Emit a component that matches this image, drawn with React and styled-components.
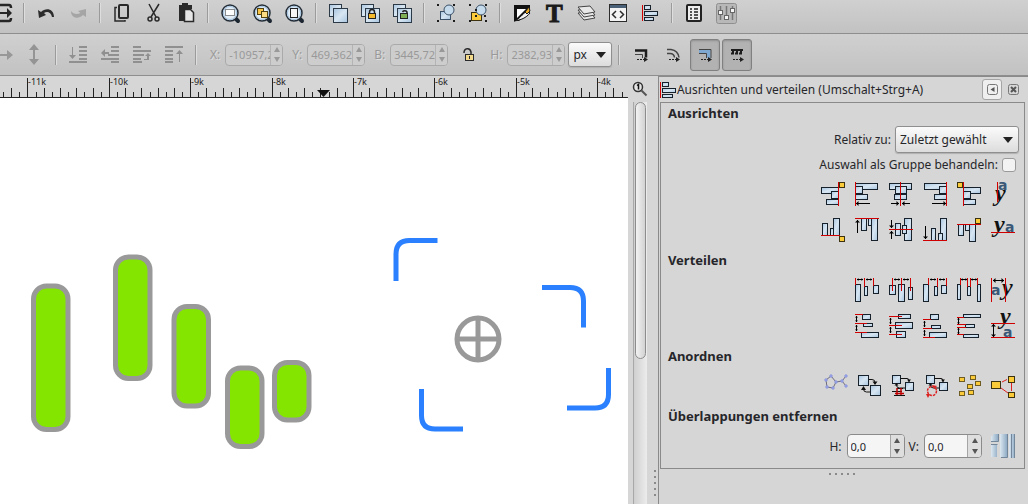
import React from 'react';
import styled, { createGlobalStyle, css } from 'styled-components';

const GlobalStyle = createGlobalStyle`
  * {
    box-sizing: border-box;
  }
  body {
    margin: 0;
    overflow: hidden;
    font-family: 'Noto Sans', 'Open Sans', sans-serif;
    font-size: 12px;
    color: #26262a;
  }
  button, input, select {
    font: inherit;
    color: inherit;
    margin: 0;
  }
`;

/* ---------- small drawing helpers ---------- */

const Box = ({ b: [x1, y1, x2, y2], gold }) => (
  <rect
    x={x1 + 0.5}
    y={y1 + 0.5}
    width={x2 - x1 - 1}
    height={y2 - y1 - 1}
    fill={gold ? '#fccb3a' : 'url(#steel)'}
    stroke={gold ? '#3d3210' : '#17212c'}
  />
);

// l = [x1, y1, x2, y2], always horizontal or vertical
const Red = ({ l: [x1, y1, x2, y2] }) => (
  <rect
    x={x1}
    y={y1}
    width={Math.max(x2 - x1, 1)}
    height={Math.max(y2 - y1, 1)}
    fill="#d00000"
  />
);

const headPath = (x, y, dir, s) => {
  if (dir === 'l') return `M${x} ${y + 0.5}l${s}-${s}v${s * 2}z`;
  if (dir === 'r') return `M${x} ${y + 0.5}l-${s}-${s}v${s * 2}z`;
  if (dir === 'u') return `M${x + 0.5} ${y}l-${s} ${s}h${s * 2}z`;
  return `M${x + 0.5} ${y}l-${s}-${s}h${s * 2}z`;
};

const Arrow = ({ l: [x1, y1, x2, y2], heads = '' }) => {
  const ends = { l: [x1, y1], u: [x1, y1], r: [x2, y1], d: [x1, y2] };
  const size = Math.max(x2 - x1, y2 - y1) < 8 ? 1.5 : 2.5;
  return (
    <>
      <rect
        x={x1}
        y={y1}
        width={Math.max(x2 - x1, 1)}
        height={Math.max(y2 - y1, 1)}
        fill="#000"
      />
      {heads.split('').map(dir => (
        <path key={dir} d={headPath(ends[dir][0], ends[dir][1], dir, size)} />
      ))}
    </>
  );
};

const Glyph = ({ size = 24, children }) => (
  <Svg width={size} height={size} viewBox={`0 0 ${size} ${size}`} aria-hidden>
    {children}
  </Svg>
);

const Letters = ({ a, y }) => (
  <>
    <text
      x={y[0]}
      y={y[1]}
      fontFamily="Liberation Serif, serif"
      fontWeight="700"
      fontStyle="italic"
      fontSize="24"
      fill="#111"
    >
      y
    </text>
    <text
      x={a[0]}
      y={a[1]}
      fontFamily="DejaVu Sans, sans-serif"
      fontWeight="700"
      fontSize="14"
      fill="#3a5877"
    >
      a
    </text>
  </>
);

const Shapes = ({ boxes = [], gold = [], red = [], arrows = [], letters }) => (
  <Glyph>
    {boxes.map((b, i) => (
      <Box key={i} b={b} />
    ))}
    {gold.map((b, i) => (
      <Box key={i} b={b} gold />
    ))}
    {letters && <Letters {...letters} />}
    {red.map((l, i) => (
      <Red key={i} l={l} />
    ))}
    {arrows.map(([l, heads], i) => (
      <Arrow key={i} l={l} heads={heads} />
    ))}
  </Glyph>
);

/* ---------- align and distribute ---------- */

const ALIGN = [
  {
    name: 'Rechte Kanten an linker Seite des Ankers ausrichten',
    boxes: [[0, 5, 18, 12], [10, 9, 18, 17], [5, 17, 18, 23]],
    gold: [[18, 0, 24, 6]],
    red: [[17, 0, 18, 24]],
  },
  {
    name: 'Linke Kanten ausrichten',
    boxes: [[0, 1, 23, 8], [0, 4, 8, 12], [0, 12, 13, 18]],
    red: [[0, 0, 1, 24]],
    arrows: [[[1, 21, 15, 21], 'l']],
  },
  {
    name: 'Vertikal zentrieren',
    boxes: [[0, 1, 23, 8], [6, 4, 18, 12], [5, 12, 18, 18]],
    red: [[11, 0, 12, 24]],
    arrows: [[[2, 21, 10, 21], 'r'], [[13, 21, 21, 21], 'l']],
  },
  {
    name: 'Rechte Kanten ausrichten',
    boxes: [[1, 1, 24, 8], [16, 4, 24, 12], [11, 12, 24, 18]],
    red: [[23, 0, 24, 24]],
    arrows: [[[9, 21, 23, 21], 'r']],
  },
  {
    name: 'Linke Kanten an rechter Seite des Ankers ausrichten',
    boxes: [[6, 5, 24, 12], [6, 9, 14, 17], [6, 17, 19, 23]],
    gold: [[0, 0, 6, 6]],
    red: [[6, 0, 7, 24]],
  },
  {
    name: 'Grundlinienanker horizontal ausrichten',
    letters: { a: [7, 8], y: [4, 19] },
    red: [[6, 0, 7, 20]],
  },
  {
    name: 'Unterkanten an Oberkante des Ankers ausrichten',
    boxes: [[1, 5, 7, 18], [9, 10, 14, 18], [12, 0, 19, 18]],
    gold: [[18, 18, 24, 24]],
    red: [[0, 17, 19, 18]],
  },
  {
    name: 'Oberkanten ausrichten',
    boxes: [[6, 0, 12, 13], [13, 0, 18, 8], [16, 0, 23, 23]],
    red: [[0, 0, 24, 1]],
    arrows: [[[2, 2, 2, 15], 'u']],
  },
  {
    name: 'Horizontal zentrieren',
    boxes: [[6, 5, 12, 18], [15, 0, 23, 23], [13, 7, 18, 16]],
    red: [[0, 11, 24, 12]],
    arrows: [[[2, 2, 2, 10], 'd'], [[2, 13, 2, 21], 'u']],
  },
  {
    name: 'Unterkanten ausrichten',
    boxes: [[8, 10, 13, 23], [17, 0, 24, 23], [15, 15, 20, 23]],
    red: [[0, 22, 24, 23]],
    arrows: [[[2, 8, 2, 21], 'd']],
  },
  {
    name: 'Oberkanten an Unterkante des Ankers ausrichten',
    boxes: [[1, 6, 7, 18], [8, 6, 13, 13], [12, 6, 19, 24]],
    gold: [[18, 0, 24, 6]],
    red: [[0, 6, 24, 7]],
  },
  {
    name: 'Grundlinien vertikal ausrichten',
    letters: { a: [14, 14], y: [3, 14] },
    red: [[0, 14, 24, 15]],
  },
];

const DISTRIBUTE = [
  {
    name: 'Linke Kanten gleichmäßig verteilen',
    boxes: [[0, 6, 6, 24], [9, 8, 13, 18], [18, 7, 24, 16]],
    red: [[0, 0, 1, 7], [9, 0, 10, 9], [18, 0, 19, 8]],
    arrows: [[[2, 1, 8, 1], 'lr'], [[11, 1, 17, 1], 'lr']],
  },
  {
    name: 'Zentren horizontal verteilen',
    boxes: [[0, 7, 7, 17], [9, 6, 16, 24], [19, 9, 24, 22]],
    red: [[3, 0, 4, 13], [12, 0, 13, 13], [21, 0, 22, 13]],
    arrows: [[[5, 1, 11, 1], 'lr'], [[14, 1, 20, 1], 'lr']],
  },
  {
    name: 'Rechte Kanten gleichmäßig verteilen',
    boxes: [[0, 6, 6, 24], [11, 8, 15, 18], [18, 7, 24, 16]],
    red: [[5, 0, 6, 7], [14, 0, 15, 9], [23, 0, 24, 8]],
    arrows: [[[7, 1, 13, 1], 'lr'], [[16, 1, 22, 1], 'lr']],
  },
  {
    name: 'Horizontale Abstände angleichen',
    boxes: [[0, 6, 4, 22], [10, 8, 14, 18], [20, 6, 24, 24]],
    red: [[3, 0, 4, 7], [10, 0, 11, 9], [13, 0, 14, 9], [20, 0, 21, 7]],
    arrows: [[[4, 1, 10, 1], 'lr'], [[14, 1, 20, 1], 'lr']],
  },
  {
    name: 'Grundlinienanker horizontal verteilen',
    letters: { a: [0, 17], y: [11, 17] },
    red: [[0, 0, 1, 24], [14, 0, 15, 24]],
    arrows: [[[2, 2, 13, 2], 'lr']],
  },
  {
    name: 'Oberkanten gleichmäßig verteilen',
    boxes: [[7, 0, 16, 6], [8, 9, 18, 13], [6, 18, 24, 24]],
    red: [[0, 0, 8, 1], [0, 9, 12, 10], [0, 18, 12, 19]],
    arrows: [[[1, 2, 1, 8], 'ud'], [[1, 11, 1, 17], 'ud']],
  },
  {
    name: 'Zentren vertikal verteilen',
    boxes: [[9, 0, 22, 5], [6, 8, 24, 15], [7, 17, 17, 24]],
    red: [[0, 2, 13, 3], [0, 11, 13, 12], [0, 20, 13, 21]],
    arrows: [[[1, 4, 1, 10], 'ud'], [[1, 13, 1, 19], 'ud']],
  },
  {
    name: 'Unterkanten gleichmäßig verteilen',
    boxes: [[7, 0, 16, 6], [8, 11, 18, 15], [6, 18, 24, 24]],
    red: [[0, 5, 8, 6], [0, 14, 9, 15], [0, 23, 12, 24]],
    arrows: [[[1, 7, 1, 13], 'ud'], [[1, 16, 1, 22], 'ud']],
  },
  {
    name: 'Vertikale Abstände angleichen',
    boxes: [[6, 0, 24, 4], [8, 10, 18, 14], [6, 20, 22, 24]],
    red: [[0, 3, 7, 4], [0, 10, 9, 11], [0, 13, 9, 14], [0, 20, 7, 21]],
    arrows: [[[1, 4, 1, 10], 'ud'], [[1, 14, 1, 20], 'ud']],
  },
  {
    name: 'Grundlinien vertikal verteilen',
    letters: { a: [12, 23], y: [9, 10] },
    red: [[0, 9, 24, 10], [0, 23, 24, 24]],
    arrows: [[[2, 10, 2, 23], 'ud']],
  },
];

const NODES = [[10, 2], [5, 6], [6, 13], [12, 14], [15, 8], [21, 7], [25, 2], [25, 12]];

const SwapArrows = () => (
  <g fill="none" stroke="#111">
    <path d="M11.5 4.5H18a2 2 0 0 1 2 2V8M7.5 10v1a3 3 0 0 0 3 3H16" />
    <path d="M18 5.500h4L20 8zM5.500 11.500h4L7.500 9z" fill="#111" stroke="none" />
  </g>
);

const ARRANGE = [
  {
    name: 'Netzwerk anordnen',
    icon: (
      <Glyph>
        <path
          d="M10 2L5 6l1 7 6 1 3-6-5-6M15 8l6-1 4-5M21 7l4 5"
          fill="none"
          stroke="#6f6b7c"
        />
        {NODES.map(([x, y]) => (
          <circle key={`${x}-${y}`} cx={x} cy={y} r="1.200" fill="#aeb9f2" stroke="#8490dc" />
        ))}
      </Glyph>
    ),
  },
  {
    name: 'Positionen tauschen',
    icon: (
      <Glyph>
        <Box b={[3, 1, 14, 12]} />
        <Box b={[15, 11, 26, 22]} />
        <g fill="none" stroke="#111">
          <path d="M14 5.500h3a3 3 0 0 1 3 3V10M8.500 14v1a3 3 0 0 0 3 3H15" />
          <path d="M17.500 7.500h5L20 11zM6 16h5l-2.500-4z" fill="#111" stroke="none" />
        </g>
      </Glyph>
    ),
  },
  {
    name: 'Positionen in Stapelfolge tauschen',
    icon: (
      <Glyph>
        <Box b={[3, 1, 12, 10]} />
        <Box b={[16, 8, 25, 17]} />
        <SwapArrows />
        <path d="M8 14.500h6M3 17.500h10M5 21.500h11" stroke="#111" />
        <path d="M8 14v7M12 14v7M6 19.500h9" stroke="#c00000" strokeWidth="1.500" />
      </Glyph>
    ),
  },
  {
    name: 'Positionen im Uhrzeigersinn tauschen',
    icon: (
      <Glyph>
        <Box b={[3, 1, 12, 10]} />
        <Box b={[16, 8, 25, 17]} />
        <SwapArrows />
        <circle
          cx="9"
          cy="17"
          r="4.500"
          fill="none"
          stroke="#d22"
          strokeWidth="1.500"
          strokeDasharray="2.500 1"
        />
        <path d="M9 11l5 1-2.500 3zM3 20l4 0-2 4z" fill="#d22" />
      </Glyph>
    ),
  },
  {
    name: 'Zentren zufällig verteilen',
    icon: (
      <Glyph>
        {[[2, 3], [13, 1], [18, 7], [10, 10], [2, 17], [11, 16]].map(([x, y]) => (
          <rect
            key={`${x}-${y}`}
            x={x + 0.5}
            y={y + 0.5}
            width="5"
            height="4"
            fill="#fccb3a"
            stroke="#6f5c22"
          />
        ))}
      </Glyph>
    ),
  },
  {
    name: 'Objekte entclustern',
    icon: (
      <Glyph>
        <path d="M11 8l5-2.500M10 14l7 5M20.500 9v8" stroke="#d22" />
        <Box b={[0, 7, 10, 15]} gold />
        <Box b={[17, 2, 24, 9]} gold />
        <Box b={[17, 18, 24, 24]} gold />
      </Glyph>
    ),
  },
];

/* ---------- command bar icons ---------- */

const Lens = ({ children }) => (
  <Glyph>
    <path d="M17 17l3 3" stroke="#1c2630" strokeWidth="4" strokeLinecap="round" />
    <circle cx="12" cy="12" r="8" fill="#e4eef7" stroke="#232d38" strokeWidth="1.500" />
    <circle cx="12" cy="12" r="6.500" fill="none" stroke="#9fc0de" />
    {children}
  </Glyph>
);

const Handles = () => (
  <path d="M3 3h2v2H3zM19 3h2v2h-2zM3 19h2v2H3zM19 19h2v2h-2z" fill="#1c1c1c" />
);

const Clones = ({ children }) => (
  <Glyph>
    <g fill="url(#steel)" stroke="#2c3a48">
      <rect x="3.500" y="3.500" width="12" height="12" />
      <rect x="7.500" y="7.500" width="14" height="14" />
    </g>
    {children}
  </Glyph>
);

const AlignGlyph = ({ size }) => (
  <Glyph size={size}>
    <Red l={[0, 4, 1, 20]} />
    <Box b={[2, 4, 9, 9]} />
    <Box b={[2, 10, 16, 15]} />
    <Box b={[2, 16, 13, 20]} />
  </Glyph>
);

const COMMANDS = [
  [
    {
      name: 'Exportieren',
      icon: (
        <Glyph>
          <path d="M8 4h11q2 0 2 3M8 20h11q2 0 2-3" fill="none" stroke="#262626" strokeWidth="2.500" />
          <path d="M8 11h9V7l5 5-5 5v-4H8z" fill="#262626" />
        </Glyph>
      ),
    },
  ],
  [
    {
      name: 'Rückgängig',
      icon: (
        <Glyph>
          <path d="M4 9l1 8 7-3-2-2c3-2 7-1 8 4h2c0-8-8-10-13-5z" fill="#2c2c2c" />
        </Glyph>
      ),
    },
    {
      name: 'Wiederherstellen',
      icon: (
        <Glyph>
          <path d="M20 8l-8 2 2.500 2C11 14 7 13 5 10c0 7 7 9 12 4l3 2z" fill="#a5a5a5" />
        </Glyph>
      ),
    },
  ],
  [
    {
      name: 'Kopieren',
      icon: (
        <Glyph>
          <rect x="9" y="4" width="9" height="13" rx="1" fill="none" stroke="#2a2a2a" strokeWidth="2" />
          <path d="M7 6.500H5V20h10v-1" fill="none" stroke="#2a2a2a" strokeWidth="1.500" />
        </Glyph>
      ),
    },
    {
      name: 'Ausschneiden',
      icon: (
        <Glyph>
          <path d="M7 3l7 13M17 3L9 16" stroke="#2a2a2a" strokeWidth="1.500" />
          <circle cx="8" cy="18" r="2" fill="none" stroke="#2a2a2a" strokeWidth="1.500" />
          <circle cx="15" cy="18" r="2" fill="none" stroke="#2a2a2a" strokeWidth="1.500" />
        </Glyph>
      ),
    },
    {
      name: 'Einfügen',
      icon: (
        <Glyph>
          <path d="M5 4h3V2h6v2h4v4h-8v12H5z" fill="#2a2a2a" />
          <path d="M10.500 8.500h6l3 3v9h-9z" fill="#e6e6e6" stroke="#2a2a2a" strokeWidth="1.500" />
        </Glyph>
      ),
    },
  ],
  [
    {
      name: 'Auswahl einpassen',
      icon: (
        <Lens>
          <rect x="7.500" y="8.500" width="9" height="6" fill="#fff" stroke="#222" strokeDasharray="1 1" />
        </Lens>
      ),
    },
    {
      name: 'Zeichnung einpassen',
      icon: (
        <Lens>
          <rect x="7.500" y="7.500" width="6" height="6" fill="#f6c54a" stroke="#54420f" />
          <rect x="11.500" y="10.500" width="6" height="6" fill="#fbdc82" stroke="#54420f" />
        </Lens>
      ),
    },
    {
      name: 'Seite einpassen',
      icon: (
        <Lens>
          <rect x="8.500" y="7.500" width="7" height="9" fill="#f4f4f4" stroke="#222" />
        </Lens>
      ),
    },
  ],
  [
    { name: 'Duplizieren', icon: <Clones /> },
    {
      name: 'Klonen',
      icon: (
        <Clones>
          <path d="M11.500 13v-2a2.500 2.500 0 0 1 5 0v2" fill="none" stroke="#222" strokeWidth="1.500" />
          <rect x="10.500" y="12.500" width="7" height="5" fill="#f5b92e" stroke="#222" />
        </Clones>
      ),
    },
    {
      name: 'Klonverbindung lösen',
      icon: (
        <Clones>
          <path d="M12.500 11a2.500 2 0 0 1 4.500 0v2" fill="none" stroke="#222" strokeWidth="1.500" />
          <rect x="10.500" y="12.500" width="7" height="5" fill="#7fae55" stroke="#222" />
        </Clones>
      ),
    },
  ],
  [
    {
      name: 'Gruppieren',
      icon: (
        <Glyph>
          <rect x="6.500" y="10.500" width="10" height="8" fill="url(#steel)" stroke="#3c5168" />
          <circle cx="15" cy="9" r="5" fill="#c6dbec" stroke="#3c5168" />
          <Handles />
        </Glyph>
      ),
    },
    {
      name: 'Gruppierung aufheben',
      icon: (
        <Glyph>
          <Box b={[5, 11, 16, 20]} gold />
          <circle cx="15" cy="9" r="5" fill="#c6dbec" stroke="#3c5168" />
          <Handles />
          <path d="M9 8h2v2H9zM9 14h2v2H9zM18 14h2v2h-2z" fill="#1c1c1c" />
        </Glyph>
      ),
    },
  ],
  [
    {
      name: 'Füllung und Kontur',
      icon: (
        <Glyph>
          <path d="M4 4h16v3L9 20H4z" fill="#111" />
          <path d="M7 8h9l-9 9z" fill="#fff" />
          <path d="M4 20c5-1 8-7 13-10l3 2c-4 5-9 7-16 8z" fill="#f4f4f4" stroke="#111" />
          <path d="M15 11l4-5 1 4-3 3z" fill="#e9a928" stroke="#1b1b1b" />
        </Glyph>
      ),
    },
    {
      name: 'Text und Schrift',
      icon: (
        <Glyph>
          <text
            x="4"
            y="21"
            fontFamily="Liberation Serif, serif"
            fontWeight="700"
            fontSize="25"
            fill="#1a1a1a"
            stroke="#1a1a1a"
          >
            T
          </text>
        </Glyph>
      ),
    },
    {
      name: 'Ebenen',
      icon: (
        <Glyph>
          {[13, 10, 7].map(y => (
            <path
              key={y}
              d={`M4 ${y - 1}l12-1 5 6-11 2z`}
              fill="#e8e8e8"
              stroke="#444"
              strokeLinejoin="round"
            />
          ))}
        </Glyph>
      ),
    },
    {
      name: 'XML-Editor',
      icon: (
        <Glyph>
          <rect x="3.500" y="3.500" width="17" height="17" fill="#f3f3f3" stroke="#2c2c2c" />
          <rect x="4" y="4" width="16" height="3" fill="#4b6178" />
          <path d="M10 10l-3.500 3.500L10 17M14 10l3.500 3.500L14 17" fill="none" stroke="#2c2c2c" strokeWidth="1.500" />
        </Glyph>
      ),
    },
    {
      name: 'Ausrichten und verteilen',
      icon: (
        <Glyph>
          <g transform="translate(4 0)">
            <Red l={[0, 4, 1, 20]} />
            <Box b={[2, 4, 9, 9]} />
            <Box b={[2, 10, 16, 15]} />
            <Box b={[2, 16, 12, 20]} />
          </g>
        </Glyph>
      ),
    },
  ],
  [
    {
      name: 'Einstellungen',
      icon: (
        <Glyph>
          <rect x="5" y="4" width="14" height="16" rx="1" fill="#eee" stroke="#222" strokeWidth="2" />
          <path
            d="M8 8h2M12 8h4M8 11h2M12 11h4M8 14h2M12 14h4M8 17h2M12 17h4"
            stroke="#222"
            strokeWidth="1.500"
          />
        </Glyph>
      ),
    },
    {
      name: 'Dokumenteinstellungen',
      icon: (
        <Glyph>
          <rect x="2.500" y="2.500" width="20" height="20" rx="2" fill="#b8b8b8" stroke="#8f8f8f" />
          <path d="M6.500 5v14M12.500 5v14M18.500 5v14" stroke="#777" strokeWidth="1.500" />
          <g fill="#f6f6f6" stroke="#666">
            <rect x="4.500" y="9.500" width="4" height="4" />
            <rect x="10.500" y="14.500" width="4" height="4" />
            <rect x="16.500" y="7.500" width="4" height="4" />
          </g>
        </Glyph>
      ),
    },
  ],
];

/* ---------- tool control icons ---------- */

const Bars = ({ rows }) => (
  <>
    {rows.map(([x, y, w]) => (
      <rect key={y} x={x} y={y} width={w} height="2" />
    ))}
  </>
);

const FLIPS = [
  {
    name: 'Horizontal umkehren',
    icon: (
      <Glyph>
        <path d="M1 12l6-5v4h10V7l6 5-6 5v-4H7v4z" fill="#989898" />
      </Glyph>
    ),
  },
  {
    name: 'Vertikal umkehren',
    icon: (
      <Glyph>
        <path d="M12 1l5 6h-4v9h4l-5 6-5-6h4V7H7z" fill="#949494" />
      </Glyph>
    ),
  },
];

const ORDER = [
  {
    name: 'Ganz nach unten',
    icon: (
      <Glyph>
        <g fill="#909090">
          <Bars rows={[[13, 3, 8], [13, 7, 8], [13, 11, 8], [13, 15, 8], [3, 18, 18]]} />
          <path d="M6 4h1v8h3l-3.500 4L3 12h3z" />
        </g>
      </Glyph>
    ),
  },
  {
    name: 'Nach unten',
    icon: (
      <Glyph>
        <g fill="#909090">
          <Bars rows={[[13, 3, 8], [13, 7, 8], [10, 11, 11], [3, 15, 18], [13, 18, 8]]} />
          <path d="M3 10l4-4v3h4v2H7v3z" />
        </g>
      </Glyph>
    ),
  },
  {
    name: 'Nach oben',
    icon: (
      <Glyph>
        <g fill="#909090">
          <Bars rows={[[3, 3, 8], [3, 7, 18], [3, 11, 11], [3, 15, 8], [3, 18, 9]]} />
          <path d="M21 13l-3-3-3 3h2v3h-3v1h5v-4z" />
        </g>
      </Glyph>
    ),
  },
  {
    name: 'Ganz nach oben',
    icon: (
      <Glyph>
        <g fill="#909090">
          <Bars rows={[[3, 3, 18], [3, 7, 8], [3, 11, 8], [3, 15, 8], [3, 18, 8]]} />
          <path d="M18 19h-1v-8h-3l3.500-4 3.500 4h-3z" />
        </g>
      </Glyph>
    ),
  },
];

const Dots = () => (
  <>
    <path d="M8 16.500h2M11 16.500h2M14 16.500h2" stroke="#222" />
    <path d="M15 14l4 2.500-4 2.500z" fill="#222" />
  </>
);

const AFFECT = [
  {
    name: 'Konturbreite skalieren',
    icon: (
      <Glyph>
        <path d="M6 7.500h11v7" fill="none" stroke="#1d1d1d" strokeWidth="2.500" />
        <path d="M6 11.500h7.500V15" fill="none" stroke="#444" />
        <Dots />
      </Glyph>
    ),
  },
  {
    name: 'Eckenradien skalieren',
    icon: (
      <Glyph>
        <path
          d="M6 6.500h4q7 1 8 8M6 10.500h3q4 0 4.500 4"
          fill="none"
          stroke="#444"
          strokeWidth="1.500"
        />
        <Dots />
      </Glyph>
    ),
  },
  {
    name: 'Farbverläufe verschieben',
    on: true,
    icon: (
      <Glyph>
        <path d="M6 8.500h9.500V15" fill="none" stroke="#7fa8d0" strokeWidth="4" />
        <path d="M6 6.500h12V15M6 10.500h7.500V15" fill="none" stroke="#444" />
        <Dots />
      </Glyph>
    ),
  },
  {
    name: 'Muster verschieben',
    on: true,
    icon: (
      <Glyph>
        <path d="M6 7h12" stroke="#1d1d1d" strokeWidth="2" />
        <path
          d="M8 8v4M12 8v4M16 8v4M6 10.500h12"
          stroke="#1d1d1d"
          strokeWidth="2"
          strokeDasharray="3 1"
        />
        <Dots />
      </Glyph>
    ),
  },
];

const LockIcon = () => (
  <Glyph>
    <path d="M7 10c0-5 6-6 7-1v3" fill="none" stroke="#2a2a2a" strokeWidth="1.500" />
    <rect x="8.500" y="11.500" width="8" height="6" fill="#f3d98b" stroke="#2a2a2a" />
    <path d="M12.500 13v3" stroke="#2a2a2a" />
  </Glyph>
);

const OverlapIcon = () => (
  <Glyph>
    <g fill="url(#pipe)">
      <path d="M0 2h2V0h5v7H0zM0 11h6v12H0z" />
      <rect x="9" width="7" height="23" />
      <rect x="18" width="6" height="24" />
    </g>
    <path
      d="M0 7.500h7.500V0M0 10.500h6.500M16.500 0v23.500H10M23.500 0v24M20.500 0v24"
      fill="none"
      stroke="#74879a"
    />
  </Glyph>
);

/* ---------- widgets ---------- */

function IconButton({ item }) {
  return (
    <ToolButton
      type="button"
      $on={item.on}
      aria-label={item.name}
      aria-pressed={item.on}
    >
      {item.icon}
    </ToolButton>
  );
}

function Spin({ id, label, value, off }) {
  return (
    <Field>
      <Label htmlFor={id} $off={off}>
        {label}
      </Label>
      <SpinFrame $off={off}>
        <SpinInput id={id} type="text" defaultValue={value} disabled={off} />
        <Steps $off={off}>
          <Step type="button" disabled={off} aria-label={`${label} erhöhen`}>
            <svg width="6" height="5" viewBox="0 0 6 5">
              <path d="M3 0l3 5H0z" fill="currentColor" />
            </svg>
          </Step>
          <Step type="button" disabled={off} aria-label={`${label} verringern`}>
            <svg width="6" height="5" viewBox="0 0 6 5">
              <path d="M3 5l3-5H0z" fill="currentColor" />
            </svg>
          </Step>
        </Steps>
      </SpinFrame>
    </Field>
  );
}

function Combo({ id, label, options, wide }) {
  return (
    <ComboFrame $wide={wide}>
      <select id={id} aria-label={label}>
        {options.map(option => (
          <option key={option}>{option}</option>
        ))}
      </select>
      <svg width="10" height="6" viewBox="0 0 10 6" aria-hidden>
        <path d="M0 0h10L5 6z" fill="#222" />
      </svg>
    </ComboFrame>
  );
}

const RULER_START = 27.4;
const RULER_STEP = 81.4;

function Ruler() {
  const ticks = [];
  for (let i = -3; i < 74; i += 1) {
    const x = Math.round(RULER_START + (i * RULER_STEP) / 10);
    const major = i % 10 === 0;
    const height = major ? 19 : i % 2 === 0 ? 9 : 5;
    ticks.push({ x, height, label: major ? `${-11 + i / 10}k` : null });
  }
  return (
    <RulerSvg height="22">
      {ticks.map(({ x, height, label }) => (
        <g key={x}>
          <rect x={x} y={21 - height} width="1" height={height} fill="#222" />
          {label && (
            <text x={x + 1} y="9" fontSize="9" fill="#222">
              {label}
            </text>
          )}
        </g>
      ))}
      <rect y="21" width="100%" height="1" fill="#222" />
      <path d="M317 14h13l-6.500 7z" fill="#111" />
    </RulerSvg>
  );
}

const GREEN_BARS = [
  [33.5, 188, 143.5],
  [115.5, 159, 121.5],
  [174, 208.5, 99.5],
  [227.5, 270, 78.5],
  [274.5, 264.5, 57.5],
];

function Drawing() {
  return (
    <Canvas>
      <g fill="#84e600" stroke="#999" strokeWidth="5">
        {GREEN_BARS.map(([x, y, h]) => (
          <rect key={x} x={x} y={y} width="34.500" height={h} rx="13" />
        ))}
      </g>
      <g fill="none" stroke="#2a80ff" strokeWidth="5">
        <path d="M396 183v-27q0-13.500 13.500-13.500h28" />
        <path d="M542 189.500h28q13.500 0 13.500 13.500v26.500" />
        <path d="M608.500 270v26.500q0 13.500-13.500 13.500h-28" />
        <path d="M421.500 291v26.500q0 13.500 13.500 13.500h28" />
      </g>
      <g fill="none" stroke="#999" strokeWidth="5">
        <circle cx="478" cy="241" r="21" />
        <path d="M478 220v42M457 241h42" />
      </g>
    </Canvas>
  );
}

function Commands() {
  return (
    <Toolbar $height={34} $shift={8}>
      {COMMANDS.map((group, index) => (
        <React.Fragment key={group[0].name}>
          {index > 0 && <Divider />}
          {group.map(item => (
            <IconButton key={item.name} item={item} />
          ))}
        </React.Fragment>
      ))}
    </Toolbar>
  );
}

function ToolControls() {
  return (
    <Toolbar $height={42}>
      {FLIPS.map(item => (
        <IconButton key={item.name} item={item} />
      ))}
      <Divider />
      {ORDER.map(item => (
        <IconButton key={item.name} item={item} />
      ))}
      <Divider />
      <Fields>
        <Spin id="x" label="X:" value="-10957,2" off />
        <Spin id="y" label="Y:" value="469,362" off />
        <Spin id="b" label="B:" value="3445,72" off />
        <LockButton type="button" aria-label="Seitenverhältnis sperren">
          <LockIcon />
        </LockButton>
        <Spin id="h" label="H:" value="2382,93" off />
      </Fields>
      <Combo label="Einheit" options={['px', 'mm', 'cm']} />
      <Toggles>
        <Divider />
        {AFFECT.map(item => (
          <IconButton key={item.name} item={item} />
        ))}
      </Toggles>
    </Toolbar>
  );
}

function AlignDock() {
  return (
    <Dock>
      <DockHeader>
        <AlignGlyph size={24} />
        <DockTitle>Ausrichten und verteilen (Umschalt+Strg+A)</DockTitle>
        <DockButton type="button" aria-label="Minimieren" $raised>
          <svg width="11" height="11" viewBox="0 0 11 11">
            <rect x=".500" y=".500" width="10" height="10" rx="2" fill="none" stroke="#777" />
            <path d="M7.500 3v5L3.500 5.500z" fill="#555" />
          </svg>
        </DockButton>
        <DockButton type="button" aria-label="Schließen">
          <svg width="11" height="11" viewBox="0 0 11 11">
            <rect x=".500" y=".500" width="10" height="10" rx="2" fill="none" stroke="#777" />
            <path d="M3 3l5 5M8 3L3 8" stroke="#555" strokeWidth="2" />
          </svg>
        </DockButton>
      </DockHeader>
      <Panel>
        <Heading>Ausrichten</Heading>
        <Line>
          <Label htmlFor="relative">Relativ zu:</Label>
          <Combo
            id="relative"
            wide
            options={['Zuletzt gewählt', 'Zuerst gewählt', 'Seite', 'Zeichnung']}
          />
        </Line>
        <CheckLine>
          <Label htmlFor="group">Auswahl als Gruppe behandeln:</Label>
          <Checkbox id="group" type="checkbox" />
        </CheckLine>
        <IconGrid $columns={6}>
          {ALIGN.map(item => (
            <GridButton key={item.name} type="button" aria-label={item.name}>
              <Shapes {...item} />
            </GridButton>
          ))}
        </IconGrid>
        <Heading>Verteilen</Heading>
        <IconGrid $columns={5}>
          {DISTRIBUTE.map(item => (
            <GridButton key={item.name} type="button" aria-label={item.name}>
              <Shapes {...item} />
            </GridButton>
          ))}
        </IconGrid>
        <Heading>Anordnen</Heading>
        <IconGrid $columns={6}>
          {ARRANGE.map(item => (
            <GridButton key={item.name} type="button" aria-label={item.name}>
              {item.icon}
            </GridButton>
          ))}
        </IconGrid>
        <Heading>Überlappungen entfernen</Heading>
        <Line>
          <Spin id="gap-h" label="H:" value="0,0" />
          <Spin id="gap-v" label="V:" value="0,0" />
          <GridButton type="button" aria-label="Überlappungen entfernen">
            <OverlapIcon />
          </GridButton>
        </Line>
      </Panel>
      <Grip>
        {[0, 1, 2, 3, 4].map(i => (
          <i key={i} />
        ))}
      </Grip>
    </Dock>
  );
}

export default function App() {
  return (
    <Window>
      <GlobalStyle />
      <Defs aria-hidden>
        <linearGradient id="steel" x1="0" y1="0" x2="1" y2="1">
          <stop offset="0" stopColor="#a9c6e0" />
          <stop offset="0.5" stopColor="#d8e6f2" />
          <stop offset="1" stopColor="#a9c6e0" />
        </linearGradient>
        <linearGradient id="pipe">
          <stop offset="0" stopColor="#dce7f0" />
          <stop offset="1" stopColor="#8fabc4" />
        </linearGradient>
      </Defs>
      <Commands />
      <ToolControls />
      <Workspace>
        <Sheet>
          <Ruler />
          <Drawing />
        </Sheet>
        <ScrollColumn>
          <ZoomButton type="button" aria-label="Zoom">
            <svg width="16" height="16" viewBox="0 0 16 16">
              <circle cx="6" cy="6" r="4.500" fill="#e6e6e6" stroke="#333" strokeWidth="1.500" />
              <path d="M5 4.500L6.500 3.500v5" fill="none" stroke="#111" strokeWidth="1.500" />
              <path d="M9.500 9.500l5 5" stroke="#555" strokeWidth="2" />
            </svg>
          </ZoomButton>
          <Trough>
            <Thumb />
          </Trough>
        </ScrollColumn>
        <Splitter>
          {[0, 1, 2, 3, 4].map(i => (
            <i key={i} />
          ))}
        </Splitter>
        <AlignDock />
      </Workspace>
    </Window>
  );
}

/* ---------- styles ---------- */

const Window = styled.div`
  display: flex;
  flex-direction: column;
  height: 100vh;
  overflow: hidden;
  background: #d6d6d6;
`;

const Defs = styled.svg`
  position: absolute;
  width: 0;
  height: 0;
`;

const Svg = styled.svg`
  display: block;
  flex: none;
  overflow: visible;
`;

const Toolbar = styled.div`
  display: flex;
  flex: none;
  align-items: center;
  height: ${({ $height }) => $height}px;
  padding-bottom: ${({ $shift }) => $shift || 0}px;
  margin-left: -14px;
  border-bottom: 1px solid #8e8e8e;
  background: linear-gradient(#d0d0d0, #c2c2c2);
`;

const ToolButton = styled.button`
  display: flex;
  flex: none;
  align-items: center;
  justify-content: center;
  width: 32px;
  height: 32px;
  padding: 0;
  border: 0;
  background: none;

  ${({ $on }) =>
    $on &&
    css`
      width: 30px;
      margin: 0 1px;
      border: 1px solid #808080;
      border-radius: 3px;
      background: #b2b2b2;
      box-shadow: inset 0 1px 2px #8f8f8f;
    `}
`;

const LockButton = styled(ToolButton)`
  width: 24px;
`;

const Divider = styled.div`
  flex: none;
  width: 2px;
  height: 20px;
  margin: 0 5px;
  border-left: 1px solid #9b9b9b;
  border-right: 1px solid #dedede;
`;

const Fields = styled.div`
  display: flex;
  align-items: center;
  gap: 9px;
  padding: 0 3px 0 8px;
`;

const Toggles = styled.div`
  display: flex;
  align-items: center;
  padding-left: 1px;
`;

const Field = styled.div`
  display: flex;
  align-items: center;
  gap: 5px;
`;

const Label = styled.label`
  color: ${({ $off }) => ($off ? '#999' : '#26262a')};
  text-shadow: ${({ $off }) => ($off ? '1px 1px #dedede' : 'none')};
`;

const SpinFrame = styled.div`
  display: flex;
  width: 58px;
  height: ${({ $off }) => ($off ? 22 : 24)}px;
  border: 1px solid ${({ $off }) => ($off ? '#aaa' : '#8b8b8b')};
  border-radius: 4px;
  background: ${({ $off }) => ($off ? '#cdcdcd' : '#f5f5f5')};
  color: ${({ $off }) => ($off ? '#999' : '#26262a')};
  overflow: hidden;
`;

const SpinInput = styled.input`
  flex: 1;
  min-width: 0;
  padding: 0 0 0 3px;
  border: 0;
  background: none;
  font-size: 11px;
`;

const Steps = styled.div`
  display: flex;
  flex: none;
  flex-direction: column;
  width: ${({ $off }) => ($off ? 12 : 14)}px;
  border-left: 1px solid ${({ $off }) => ($off ? '#b4b4b4' : '#a5a5a5')};
  background: ${({ $off }) => ($off ? '#cdcdcd' : '#dedede')};
`;

const Step = styled.button`
  display: flex;
  flex: 1;
  align-items: center;
  justify-content: center;
  padding: 0;
  border: 0;
  background: none;
  color: #555;

  &:disabled {
    color: #999;
  }
`;

const ComboFrame = styled.div`
  display: grid;
  flex: none;
  align-items: center;
  width: ${({ $wide }) => ($wide ? 124 : 44)}px;
  height: ${({ $wide }) => ($wide ? 27 : 25)}px;
  border: 1px solid #8f8f8f;
  border-radius: 3px;
  background: linear-gradient(#fbfbfb, #dcdcdc);
  box-shadow: 0 1px 1px #b0b0b0;

  select {
    grid-area: 1 / 1;
    width: 100%;
    height: 100%;
    padding: 0 4px;
    border: 0;
    appearance: none;
    background: none;
  }

  svg {
    grid-area: 1 / 1;
    justify-self: end;
    margin-right: 5px;
    pointer-events: none;
  }
`;

const Workspace = styled.div`
  display: flex;
  flex: 1;
  min-height: 0;
`;

const Sheet = styled.div`
  display: flex;
  flex: 1;
  flex-direction: column;
  min-width: 0;
`;

const RulerSvg = styled.svg`
  display: block;
  flex: none;
  width: 100%;
  overflow: visible;
`;

const Canvas = styled.svg`
  display: block;
  flex: 1;
  width: 100%;
  min-height: 0;
  background: #fff;
`;

const ScrollColumn = styled.div`
  display: flex;
  flex: none;
  flex-direction: column;
  align-items: center;
  width: 24px;
`;

const ZoomButton = styled.button`
  height: 26px;
  padding: 4px 0 0;
  border: 0;
  background: none;
`;

const Trough = styled.div`
  flex: 1;
  width: 14px;
  border-left: 1px solid #a8a8a8;
  background: linear-gradient(90deg, #cfcfcf, #ececec);
`;

const Thumb = styled.div`
  width: 11px;
  height: 64%;
  margin-left: 1px;
  border: 1px solid #8c8c8c;
  border-radius: 6px;
  background: linear-gradient(90deg, #f2f2f2, #d2d2d2);
`;

const Splitter = styled.div`
  display: flex;
  flex: none;
  flex-direction: column;
  justify-content: flex-end;
  gap: 4px;
  width: 6px;
  padding: 0 2px 8px;

  i {
    width: 2px;
    height: 2px;
    background: #8a8a8a;
  }
`;

const Dock = styled.div`
  flex: none;
  width: 36%;
  padding: 0 3px 0 1px;
  border-top: 1px solid #8a8a8a;
  border-left: 1px solid #8a8a8a;
`;

const DockHeader = styled.div`
  display: flex;
  align-items: center;
  height: 25px;
`;

const DockTitle = styled.div`
  flex: 1;
  margin-left: -7px;
  white-space: nowrap;
`;

const DockButton = styled.button`
  display: flex;
  align-items: center;
  justify-content: center;
  width: ${({ $raised }) => ($raised ? 20 : 23)}px;
  height: 21px;
  padding: 0;
  border: 1px solid ${({ $raised }) => ($raised ? '#a5a5a5' : 'transparent')};
  border-radius: 3px;
  background: ${({ $raised }) => ($raised ? '#efefef' : 'none')};
`;

const Panel = styled.div`
  border: 1px solid #8a8a8a;
  padding: 0 4px 4px 7px;
`;

const Heading = styled.h2`
  height: 24px;
  margin: 0;
  font-size: 13px;
  font-weight: 700;
  line-height: 24px;

  &:first-child {
    height: 23px;
    line-height: 20px;
  }
`;

const Line = styled.div`
  display: flex;
  align-items: center;
  justify-content: flex-end;
  gap: 4px;

  > ${ComboFrame} {
    margin-right: 1px;
  }
`;

const CheckLine = styled(Line)`
  height: 23px;
  padding-right: 4px;
`;

const Checkbox = styled.input`
  width: 14px;
  height: 14px;
  appearance: none;
  border: 1px solid #9a9a9a;
  border-radius: 3px;
  background: #f3f3f3;
`;

const IconGrid = styled.div`
  display: grid;
  justify-content: end;
  grid-template-columns: repeat(${({ $columns }) => $columns}, 34px);
`;

const GridButton = styled.button`
  display: flex;
  align-items: center;
  justify-content: center;
  width: 34px;
  height: 36px;
  padding: 0;
  border: 0;
  background: none;
`;

const Grip = styled.div`
  display: flex;
  justify-content: center;
  gap: 4px;
  padding-top: 4px;

  i {
    width: 2px;
    height: 2px;
    background: #8a8a8a;
  }
`;
